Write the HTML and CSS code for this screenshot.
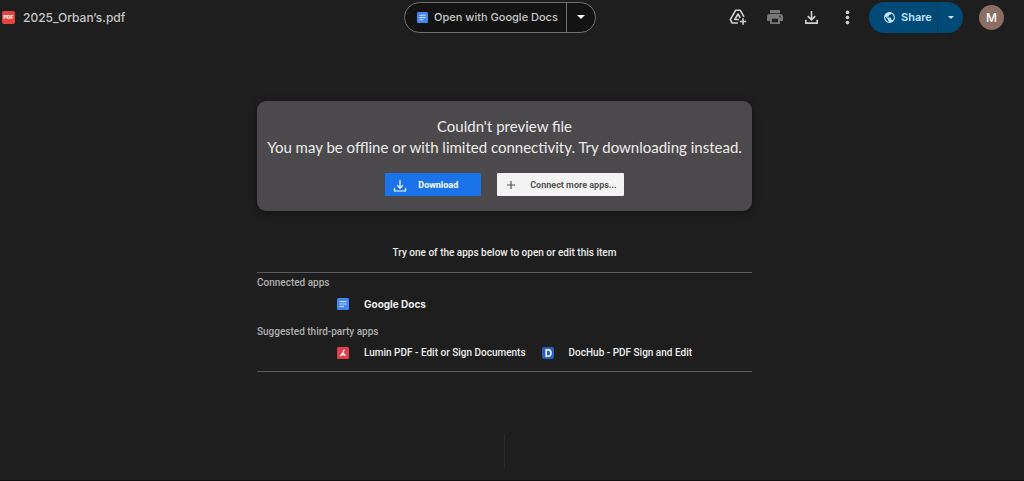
FILE: index.html
```html
<!DOCTYPE html>
<html lang="en">
<head>
<meta charset="utf-8">
<title>2025_Orban’s.pdf</title>
<link rel="stylesheet" href="styles.css">
</head>
<body>
<header class="topbar">
  <div class="file">
    <span class="pdf-badge">PDF</span>
    <h1 class="file-name">2025_Orban’s.pdf</h1>
  </div>
  <div class="open-with">
    <button class="open-main" type="button">
      <svg class="docs-small" viewBox="0 0 12 12" aria-hidden="true"><rect width="12" height="12" rx="1.5" fill="#4285f4"/><path d="M2.5 3.5h7M2.5 6h7M2.5 8.5h4.500" stroke="#d5e5ff" stroke-width="1.2"/></svg>
      Open with Google Docs
    </button>
    <button class="open-more" type="button" aria-label="More apps">
      <svg class="caret" viewBox="0 0 8 4" aria-hidden="true"><path d="M0 0h8L4 4z" fill="currentColor"/></svg>
    </button>
  </div>
  <div class="actions">
    <button class="icon-button" type="button" aria-label="Add shortcut to Drive">
      <svg viewBox="0 0 18 18" aria-hidden="true" fill="none" stroke="currentColor" stroke-width="1.600" stroke-linejoin="round"><path d="M9 15H3.200L1.300 11.700 6.700 2.200h4.500L15 8.800"/><path d="M10 11.500H5.800L9 6l2.300 4"/><path d="M14 10.300v6.400M10.800 13.500h6.400"/></svg>
    </button>
    <button class="icon-button icon-muted" type="button" aria-label="Print">
      <svg viewBox="0 0 18 18" aria-hidden="true" fill="currentColor"><path fill-rule="evenodd" d="M4 2h10v3.200H4zM3.500 6h11A2.500 2.500 0 0 1 17 8.500V13h-3v3H4v-3H1V8.500A2.500 2.500 0 0 1 3.500 6zM6 10.800v3.400h6v-3.400zM13.300 7.800v1.400h1.400V7.800z"/></svg>
    </button>
    <button class="icon-button" type="button" aria-label="Download">
      <svg viewBox="0 0 18 18" aria-hidden="true" fill="none" stroke="currentColor" stroke-width="1.700"><path d="M9 2v9M5 7.500l4 4 4-4M3 11.500V15h12v-3.500"/></svg>
    </button>
    <button class="icon-button" type="button" aria-label="More actions">
      <svg viewBox="0 0 18 18" aria-hidden="true" fill="currentColor"><circle cx="9" cy="3.600" r="1.900"/><circle cx="9" cy="9" r="1.900"/><circle cx="9" cy="14.400" r="1.900"/></svg>
    </button>
    <div class="share">
      <button class="share-main" type="button">
        <svg class="globe" viewBox="0 0 24 24" aria-hidden="true" fill="currentColor"><path d="M12 2C6.480 2 2 6.480 2 12s4.480 10 10 10 10-4.480 10-10S17.520 2 12 2zm-1 17.930c-3.950-.49-7-3.850-7-7.930 0-.62.080-1.210.21-1.790L9 15v1c0 1.100.9 2 2 2v1.930zm6.900-2.540c-.26-.81-1-1.390-1.900-1.390h-1v-3c0-.55-.45-1-1-1H8v-2h2c.55 0 1-.45 1-1V7h2c1.100 0 2-.9 2-2v-.41c2.930 1.190 5 4.060 5 7.410 0 2.080-.8 3.970-2.100 5.390z"/></svg>
        Share
      </button>
      <button class="share-more" type="button" aria-label="Sharing options">
        <svg class="caret-small" viewBox="0 0 6 3" aria-hidden="true"><path d="M0 0h6L3 3z" fill="currentColor"/></svg>
      </button>
    </div>
    <button class="avatar" type="button">M</button>
  </div>
</header>
<main class="content">
  <section class="notice">
    <p class="notice-text">Couldn't preview file<br>You may be offline or with limited connectivity. Try downloading instead.</p>
    <div class="notice-actions">
      <button class="btn btn-primary" type="button">
        <svg class="btn-icon" viewBox="0 0 14 14" aria-hidden="true" fill="none" stroke="currentColor" stroke-width="1.200"><path d="M7 2v8M4 7.200l3 3 3-3M1.500 10v3h11v-3"/></svg>
        Download
      </button>
      <button class="btn btn-light" type="button">
        <svg class="btn-icon" viewBox="0 0 14 14" aria-hidden="true" fill="none" stroke="currentColor" stroke-width="1.200"><path d="M7 3v8M3 7h8"/></svg>
        Connect more apps...
      </button>
    </div>
  </section>
  <section class="apps">
    <p class="apps-hint">Try one of the apps below to open or edit this item</p>
    <div class="apps-list">
      <h2 class="apps-heading">Connected apps</h2>
      <div class="apps-row">
        <a class="app app-strong" href="#">
          <svg class="app-icon" viewBox="0 0 12 12" aria-hidden="true"><rect width="12" height="12" rx="1.500" fill="#4285f4"/><path d="M2.500 3.500h7M2.500 6h7M2.500 8.500h4.500" stroke="#d5e5ff" stroke-width="1.200"/></svg>
          Google Docs
        </a>
      </div>
      <h2 class="apps-heading">Suggested third-party apps</h2>
      <div class="apps-row">
        <a class="app" href="#">
          <svg class="app-icon" viewBox="0 0 12 12" aria-hidden="true"><rect width="12" height="12" rx="1.500" fill="#e0404c"/><path d="M7.200 3C6.200 5 5.200 7.400 3.400 8.700M3.800 8.500c1.600-1 3.200-.9 4.800 0M6 6.300l1.400.8" fill="none" stroke="#fff" stroke-width="1.100" stroke-linecap="round"/></svg>
          Lumin PDF - Edit or Sign Documents
        </a>
        <a class="app" href="#">
          <svg class="app-icon" viewBox="0 0 12 12" aria-hidden="true"><rect width="12" height="12" rx="2" fill="#2860bd"/><path d="M4.200 2.700h1.500a3.300 3.300 0 0 1 0 6.600H4.200z" fill="none" stroke="#fff" stroke-width="1.500"/></svg>
          DocHub - PDF Sign and Edit
        </a>
      </div>
    </div>
  </section>
  <div class="page-divider"></div>
</main>
</body>
</html>
```
FILE: styles.css
```css
* {
  box-sizing: border-box;
}

body {
  margin: 0;
  min-height: 100vh;
  display: flex;
  flex-direction: column;
  background: #1e1e1e;
  border-bottom: 1px solid #101010;
  color: #ececec;
  font-family: Inter, "Open Sans", sans-serif;
  font-size: 10px;
}

button {
  margin: 0;
  padding: 0;
  border: 0;
  background: none;
  color: inherit;
  font: inherit;
  cursor: pointer;
}

svg {
  display: block;
  flex: none;
}

.topbar {
  display: grid;
  grid-template-columns: 1fr auto 1fr;
  align-items: center;
  height: 34px;
  padding-right: 20px;
}

.file {
  display: flex;
  align-items: center;
  gap: 8px;
  padding-left: 2px;
}

.pdf-badge {
  width: 13px;
  height: 13px;
  border-radius: 2px;
  background: #e5443b;
  color: #fff;
  font-size: 5px;
  font-weight: 800;
  line-height: 13px;
  text-align: center;
}

.file-name {
  margin: 0;
  color: #c7c7c7;
  font-size: 12px;
  font-weight: 500;
}

.open-with {
  display: flex;
  height: 31px;
  margin-right: 4px;
  border: 1px solid #707070;
  border-radius: 16px;
  background: #131314;
}

.open-main {
  display: flex;
  align-items: center;
  gap: 6px;
  padding: 0 8px 0 12px;
  border-right: 1px solid #707070;
  color: #c7c7c7;
  font-size: 11px;
  font-weight: 500;
}

.docs-small {
  width: 11px;
  height: 11px;
}

.open-more {
  display: flex;
  align-items: center;
  justify-content: center;
  width: 28px;
  color: #fff;
}

.caret {
  width: 8px;
  height: 4px;
}

.actions {
  display: flex;
  align-items: center;
  justify-content: flex-end;
  color: #d0d0d0;
}

.icon-button {
  margin-right: 19px;
}

.icon-button svg {
  width: 18px;
  height: 18px;
}

.icon-button:nth-child(n + 3) svg {
  width: 17px;
  height: 17px;
}

.icon-muted {
  color: #777;
}

.icon-button:nth-child(4) {
  margin-right: 13px;
}

.share {
  display: flex;
  height: 31px;
  margin-right: 16px;
  border-radius: 16px;
  background: #004a77;
  color: #c2e7ff;
}

.share-main {
  display: flex;
  align-items: center;
  gap: 5px;
  width: 69px;
  padding-left: 14px;
  border-right: 1px solid #173a50;
  font-size: 11px;
  font-weight: 600;
}

.globe {
  width: 13px;
  height: 13px;
}

.share-more {
  display: flex;
  align-items: center;
  justify-content: center;
  width: 25px;
}

.caret-small {
  width: 6px;
  height: 3px;
}

.avatar {
  width: 25px;
  height: 25px;
  border-radius: 50%;
  background: #8d6e63;
  color: #fff;
  font-size: 12px;
  font-weight: 500;
}

.content {
  flex: 1;
  display: flex;
  flex-direction: column;
  align-items: center;
  padding: 67px 15px 12px 0;
  font-family: Roboto, sans-serif;
}

.notice {
  width: 100%;
  max-width: 495px;
  padding: 15px 0;
  border-radius: 9px;
  background: #4b494b;
  box-shadow: 0 2px 8px rgba(0, 0, 0, 0.4);
  text-align: center;
}

.notice-text {
  margin: 0 0 15px;
  font-family: Lato, sans-serif;
  font-size: 15px;
  line-height: 21px;
}

.notice-actions {
  display: flex;
  justify-content: center;
  gap: 16px;
}

.btn {
  display: flex;
  align-items: center;
  height: 23px;
  border-radius: 1px;
  font-size: 9px;
  font-weight: 700;
}

.btn-icon {
  width: 14px;
  height: 14px;
}

.btn-primary {
  gap: 11px;
  padding: 0 23px 0 8px;
  background: #1a73e8;
  color: #fff;
}

.btn-light {
  gap: 12px;
  padding: 0 7px;
  background: #f3f3f3;
  color: #555;
}

.apps {
  width: 100%;
  max-width: 495px;
  margin-top: 34px;
}

.apps-hint {
  margin: 0 0 11px;
  font-weight: 500;
  line-height: 16px;
  text-align: center;
}

.apps-list {
  padding-bottom: 7px;
  border-top: 1px solid #5a5a5a;
  border-bottom: 1px solid #5a5a5a;
}

.apps-heading {
  margin: 0;
  color: #b0b0b0;
  font-size: 10px;
  font-weight: 500;
  line-height: 20px;
}

.apps-row {
  display: flex;
  gap: 16px;
  padding-left: 80px;
}

.app {
  display: flex;
  align-items: center;
  gap: 15px;
  font-weight: 500;
  line-height: 22px;
  color: inherit;
  text-decoration: none;
}

.app-icon {
  width: 12px;
  height: 12px;
}

.app-strong {
  margin-bottom: 7px;
  font-family: Inter, sans-serif;
  font-weight: 700;
}

.page-divider {
  width: 1px;
  height: 34px;
  margin-top: auto;
  background: #2a2a2a;
}
```
